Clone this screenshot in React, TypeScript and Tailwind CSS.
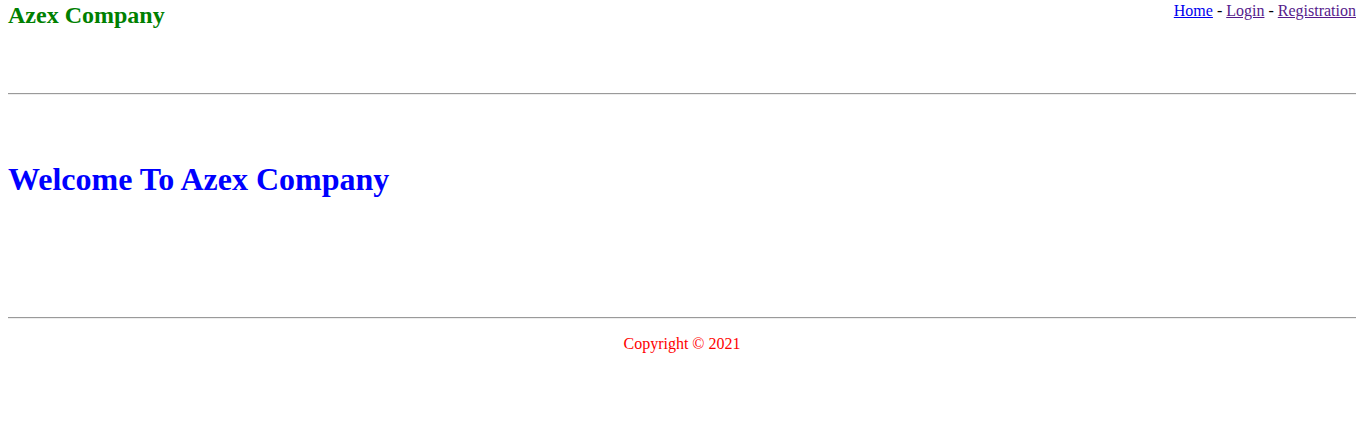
export default function App() {
  return (
    <div className="min-h-[445px] bg-white px-2 font-['Times_New_Roman','Liberation_Serif',serif] text-black">
      {/* header */}
      <div className="flex h-[93px] items-start justify-between pt-[2px]">
        <h2 className="text-[24px] font-bold leading-[normal] text-[#008000]">Azex Company</h2>
        <nav className="text-[16px] leading-[normal]">
          <a href="#" className="text-[#0000ee] underline">Home</a>
          {' - '}
          <a href="#" className="text-[#551a8b] underline">Login</a>
          {' - '}
          <a href="#" className="text-[#551a8b] underline">Registration</a>
        </nav>
      </div>
      <hr className="border-t border-b border-t-[#9a9a9a] border-b-[#eeeeee]" />

      <h1 className="mt-[66px] text-[32px] font-bold leading-[normal] text-[#0000ff]">
        Welcome To Azex Company
      </h1>

      <hr className="mt-[119px] border-t border-b border-t-[#9a9a9a] border-b-[#eeeeee]" />
      <p className="mt-[16px] text-center text-[16px] leading-[normal] text-[#ff0000]">Copyright © 2021</p>
    </div>
  )
}
